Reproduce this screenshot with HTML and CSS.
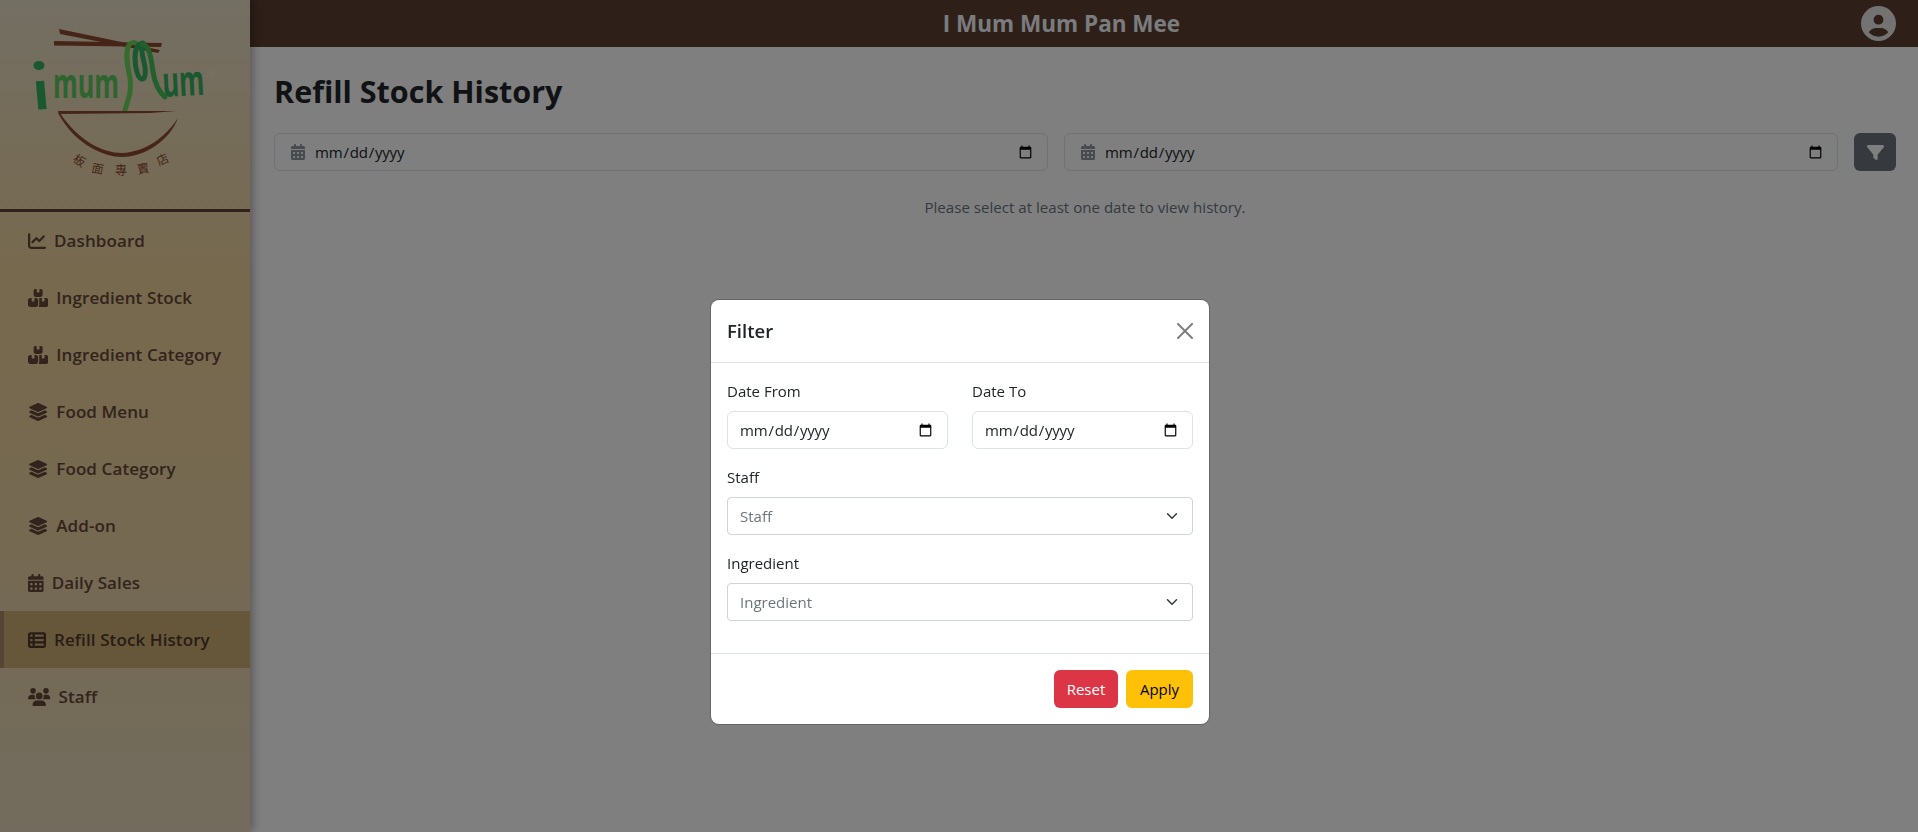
FILE: index.html
```html
<!DOCTYPE html>
<html lang="en">
<head>
<meta charset="utf-8">
<title>Refill Stock History</title>
<link rel="stylesheet" href="styles.css">
</head>
<body>
<svg class="defs" width="0" height="0" aria-hidden="true">
  <symbol id="i-chart" viewBox="0 0 512 512"><path d="M64 64c0-17.7-14.3-32-32-32S0 46.3 0 64V400c0 44.2 35.8 80 80 80H480c17.7 0 32-14.3 32-32s-14.3-32-32-32H80c-8.8 0-16-7.2-16-16V64zm406.6 86.6c12.5-12.5 12.5-32.8 0-45.3s-32.8-12.5-45.3 0L320 210.7l-57.4-57.4c-12.5-12.5-32.8-12.5-45.3 0l-112 112c-12.5 12.5-12.5 32.8 0 45.3s32.8 12.5 45.3 0L240 221.3l57.4 57.4c12.5 12.5 32.8 12.5 45.3 0l128-128z"/></symbol>
  <symbol id="i-boxes" viewBox="0 0 576 512"><path d="M248 0H208c-26.5 0-48 21.5-48 48V160c0 35.3 28.7 64 64 64H352c35.3 0 64-28.7 64-64V48c0-26.5-21.5-48-48-48H328V80c0 8.8-7.2 16-16 16H264c-8.8 0-16-7.2-16-16V0zM64 256c-35.3 0-64 28.7-64 64V448c0 35.3 28.7 64 64 64H224c35.3 0 64-28.7 64-64V320c0-35.3-28.7-64-64-64H184v80c0 8.8-7.2 16-16 16H120c-8.8 0-16-7.2-16-16V256H64zM352 512H512c35.3 0 64-28.7 64-64V320c0-35.3-28.7-64-64-64H472v80c0 8.8-7.2 16-16 16H408c-8.8 0-16-7.2-16-16V256H352c-15 0-28.8 5.1-39.7 13.8c4.9 15.4 7.7 31.8 7.7 48.2V448c0 23.3-7 44.8-18.9 62.8c5.1 .8 10.3 1.2 15.7 1.2z"/></symbol>
  <symbol id="i-layers" viewBox="0 0 576 512"><path d="M264.5 5.2c14.9-6.9 32.1-6.9 47 0l218.6 101c8.5 3.9 13.9 12.4 13.9 21.8s-5.4 17.9-13.9 21.8l-218.6 101c-14.9 6.9-32.1 6.9-47 0L45.9 149.8C37.4 145.8 32 137.3 32 128s5.4-17.9 13.9-21.8L264.5 5.2zM476.9 209.6l53.2 24.6c8.5 3.9 13.9 12.4 13.9 21.8s-5.4 17.9-13.9 21.8l-218.6 101c-14.9 6.9-32.1 6.9-47 0L45.9 277.8C37.4 273.8 32 265.3 32 256s5.4-17.9 13.9-21.8l53.2-24.6 152 70.2c23.4 10.8 50.4 10.8 73.8 0l152-70.2zm-152 198.2l152-70.2 53.2 24.6c8.5 3.9 13.9 12.4 13.9 21.8s-5.4 17.9-13.9 21.8l-218.6 101c-14.9 6.9-32.1 6.9-47 0L45.9 405.8C37.4 401.8 32 393.3 32 384s5.4-17.9 13.9-21.8l53.2-24.6 152 70.2c23.4 10.8 50.4 10.8 73.8 0z"/></symbol>
  <symbol id="i-calendar" viewBox="0 0 448 512"><path d="M128 0c17.7 0 32 14.3 32 32V64H288V32c0-17.7 14.3-32 32-32s32 14.3 32 32V64h48c26.5 0 48 21.5 48 48v48H0V112C0 85.5 21.5 64 48 64H96V32c0-17.7 14.3-32 32-32zM0 192H448V464c0 26.5-21.5 48-48 48H48c-26.5 0-48-21.5-48-48V192zm64 80v32c0 8.8 7.2 16 16 16h32c8.8 0 16-7.2 16-16V272c0-8.8-7.2-16-16-16H80c-8.8 0-16 7.2-16 16zm128 0v32c0 8.8 7.2 16 16 16h32c8.8 0 16-7.2 16-16V272c0-8.8-7.2-16-16-16H208c-8.8 0-16 7.2-16 16zm144-16c-8.8 0-16 7.2-16 16v32c0 8.8 7.2 16 16 16h32c8.8 0 16-7.2 16-16V272c0-8.8-7.2-16-16-16H336zM64 400v32c0 8.8 7.2 16 16 16h32c8.8 0 16-7.2 16-16V400c0-8.8-7.2-16-16-16H80c-8.8 0-16 7.2-16 16zm144-16c-8.8 0-16 7.2-16 16v32c0 8.8 7.2 16 16 16h32c8.8 0 16-7.2 16-16V400c0-8.8-7.2-16-16-16H208zm112 16v32c0 8.8 7.2 16 16 16h32c8.8 0 16-7.2 16-16V400c0-8.8-7.2-16-16-16H336c-8.8 0-16 7.2-16 16z"/></symbol>
  <symbol id="i-table" viewBox="0 0 512 512"><path d="M0 96C0 60.7 28.7 32 64 32H448c35.3 0 64 28.7 64 64V416c0 35.3-28.7 64-64 64H64c-35.3 0-64-28.7-64-64V96zm64 0v64h64V96H64zm384 0H192v64H448V96zM64 224v64h64V224H64zm384 0H192v64H448V224zM64 352v64h64V352H64zm384 0H192v64H448V352z"/></symbol>
  <symbol id="i-users" viewBox="0 0 640 512"><path d="M144 0a80 80 0 1 1 0 160A80 80 0 1 1 144 0zM512 0a80 80 0 1 1 0 160A80 80 0 1 1 512 0zM0 298.7C0 239.8 47.8 192 106.7 192h42.7c15.9 0 31 3.5 44.6 9.7c-1.3 7.2-1.9 14.7-1.9 22.3c0 38.2 16.8 72.5 43.3 96c-.2 0-.4 0-.7 0H21.3C9.6 320 0 310.4 0 298.7zM405.3 320c-.2 0-.4 0-.7 0c26.6-23.5 43.3-57.8 43.3-96c0-7.6-.7-15-1.9-22.3c13.6-6.3 28.7-9.7 44.6-9.7h42.7C592.2 192 640 239.8 640 298.7c0 11.8-9.6 21.3-21.3 21.3H405.3zM224 224a96 96 0 1 1 192 0 96 96 0 1 1 -192 0zM128 485.3C128 411.7 187.7 352 261.3 352H378.7C452.3 352 512 411.7 512 485.3c0 14.7-11.9 26.7-26.7 26.7H154.7c-14.7 0-26.7-11.9-26.7-26.7z"/></symbol>
</svg>

<div class="app">
  <aside class="sidebar">
    <div class="logo">
      <svg class="logo-art" width="250" height="209" viewBox="0 0 250 209" role="img" aria-label="I Mum Mum logo">
        <path class="lg-wood" d="M59 29 L160 50 L158 53 L60 34Z"/>
        <path class="lg-wood" d="M54 41 L162 43 L161 47 L54 45.5Z"/>
        <ellipse class="lg-dark" cx="39" cy="65.5" rx="5.5" ry="4.5"/>
        <text class="lg-word lg-dark" transform="translate(34 110) rotate(-5)" font-size="52" textLength="17" lengthAdjust="spacingAndGlyphs">ı</text>
        <text class="lg-word lg-light" x="53" y="98" font-size="42" textLength="66" lengthAdjust="spacingAndGlyphs">mum</text>
        <text class="lg-word lg-dark" transform="translate(163 97) rotate(-3)" font-size="42" textLength="42" lengthAdjust="spacingAndGlyphs">um</text>
        <path class="lg-noodle-l" d="M125 110 C129 97 132 90 130 78 C127 64 125 52 129 45 C131 42 135 42 137 44"/>
        <path class="lg-noodle-d" d="M143 43 C137 44 135 50 135 58 C135 68 138 79 142 79 C146 79 146 70 144 62 C142 54 141 48 142 44"/>
        <path class="lg-noodle-m" d="M142 44 C150 46 151 58 153 72 C155 84 159 92 165 97"/>
        <path class="lg-wood" d="M58 111 L176 111 L150 113 L59 114Z"/>
        <path class="lg-wood" d="M58 113 C75 145 105 157 122 157 C145 157 170 140 178 118 C165 138 145 152 122 153 C102 153 78 140 60 113Z"/>
        <text class="lg-mark" x="207" y="79" font-size="10">®</text>
        <g class="lg-cjk" font-size="12">
          <text transform="translate(72 161) rotate(32)">板</text>
          <text transform="translate(91 172) rotate(10)">面</text>
          <text transform="translate(115 175)">專</text>
          <text transform="translate(138 174) rotate(-10)">賣</text>
          <text transform="translate(159 166) rotate(-25)">店</text>
        </g>
      </svg>
    </div>
    <nav class="nav">
      <a class="nav-item"><svg class="ico w18"><use href="#i-chart"/></svg>Dashboard</a>
      <a class="nav-item"><svg class="ico w20"><use href="#i-boxes"/></svg>Ingredient Stock</a>
      <a class="nav-item"><svg class="ico w20"><use href="#i-boxes"/></svg>Ingredient Category</a>
      <a class="nav-item"><svg class="ico w20"><use href="#i-layers"/></svg>Food Menu</a>
      <a class="nav-item"><svg class="ico w20"><use href="#i-layers"/></svg>Food Category</a>
      <a class="nav-item"><svg class="ico w20"><use href="#i-layers"/></svg>Add-on</a>
      <a class="nav-item"><svg class="ico w16"><use href="#i-calendar"/></svg>Daily Sales</a>
      <a class="nav-item active"><svg class="ico w18"><use href="#i-table"/></svg>Refill Stock History</a>
      <a class="nav-item"><svg class="ico w22"><use href="#i-users"/></svg>Staff</a>
    </nav>
  </aside>

  <div class="main">
    <header class="topbar">
      <div class="brand">I Mum Mum Pan Mee</div>
      <svg class="avatar" viewBox="0 0 512 512"><path d="M399 384.2C376.9 345.8 335.4 320 288 320H224c-47.4 0-88.9 25.8-111 64.2c35.2 39.2 86.2 63.8 143 63.8s107.8-24.7 143-63.8zM0 256a256 256 0 1 1 512 0A256 256 0 1 1 0 256zm256 16a72 72 0 1 0 0-144 72 72 0 1 0 0 144z"/></svg>
    </header>
    <section class="content">
      <h1 class="title">Refill Stock History</h1>
      <div class="filters">
        <label class="date-field"><svg class="date-ico"><use href="#i-calendar"/></svg><input class="date-input" type="date"></label>
        <label class="date-field"><svg class="date-ico"><use href="#i-calendar"/></svg><input class="date-input" type="date"></label>
        <button class="filter-btn" type="button"><svg class="filter-ico" viewBox="0 0 512 512"><path d="M3.9 54.9C10.5 40.9 24.5 32 40 32H472c15.5 0 29.5 8.9 36.1 22.9s4.6 30.5-5.2 42.5L320 320.9V448c0 12.1-6.8 23.2-17.7 28.6s-23.8 4.3-33.5-3l-64-48c-8.1-6-12.8-15.5-12.8-25.6V320.9L9 97.3C-.7 85.4-2.8 68.8 3.9 54.9z"/></svg></button>
      </div>
      <p class="note">Please select at least one date to view history.</p>
    </section>
  </div>
</div>

<div class="overlay">
  <div class="modal">
    <div class="modal-head">
      <h2 class="modal-title">Filter</h2>
      <svg class="close" viewBox="0 0 16 16"><path d="M.293.293a1 1 0 0 1 1.414 0L8 6.586 14.293.293a1 1 0 1 1 1.414 1.414L9.414 8l6.293 6.293a1 1 0 0 1-1.414 1.414L8 9.414l-6.293 6.293a1 1 0 0 1-1.414-1.414L6.586 8 .293 1.707a1 1 0 0 1 0-1.414z"/></svg>
    </div>
    <div class="modal-body">
      <div class="two-col">
        <div class="group"><label class="lbl">Date From</label><input class="ctl" type="date"></div>
        <div class="group"><label class="lbl">Date To</label><input class="ctl" type="date"></div>
      </div>
      <div class="group"><label class="lbl">Staff</label>
        <select class="ctl sel"><option>Staff</option></select></div>
      <div class="group"><label class="lbl">Ingredient</label>
        <select class="ctl sel"><option>Ingredient</option></select></div>
    </div>
    <div class="modal-foot">
      <button class="btn btn-reset" type="button">Reset</button>
      <button class="btn btn-apply" type="button">Apply</button>
    </div>
  </div>
</div>
</body>
</html>
```
FILE: styles.css
```css
* { box-sizing: border-box; }
html, body { height: 100%; }
body {
  margin: 0;
  font-family: "Open Sans", "Noto Sans", sans-serif;
  font-size: 15.1px;
  line-height: 1.6;
  color: #212529;
  background: #fff;
  overflow: hidden;
}
.defs { position: absolute; }
.app { display: flex; height: 100vh; }

/* Sidebar */
.sidebar {
  flex: 0 0 250px;
  width: 250px;
  background: linear-gradient(180deg, #e8dec8 0%, #eed29a 35%, #ead2a4 65%, #e6d8bc 100%);
  box-shadow: 2px 0 10px rgba(0,0,0,.35);
  z-index: 2;
}
.logo { height: 212px; border-bottom: 3px solid #604434; }
.logo-art { display: block; }
.lg-wood { fill: #8c4a30; }
.lg-dark { fill: #34b060; }
.lg-light { fill: #5cc85c; }
.lg-word { font-family: "Open Sans", sans-serif; font-weight: 700; }
.lg-noodle-l, .lg-noodle-d, .lg-noodle-m { fill: none; stroke-width: 5; stroke-linecap: round; }
.lg-noodle-l { stroke: #6ad85a; }
.lg-noodle-d { stroke: #34b060; }
.lg-noodle-m { stroke: #44c05c; }
.lg-mark { fill: #f0e8d8; font-family: "Open Sans", sans-serif; }
.lg-cjk { fill: #8c4a30; font-family: "Noto Sans CJK TC", sans-serif; }

.nav { display: flex; flex-direction: column; }
.nav-item {
  display: flex;
  align-items: center;
  height: 57px;
  padding-left: 28px;
  font-size: 17px;
  font-weight: 600;
  letter-spacing: .1px;
  color: #644838;
}
.nav-item.active {
  background: #cfae74;
  box-shadow: inset 4px 0 0 #ac8a6c;
  color: #4e3a2c;
}
.ico { height: 18px; margin-right: 8px; fill: currentColor; flex: none; }
.w16 { width: 15.75px; }
.w18 { width: 18px; }
.w20 { width: 20.25px; }
.w22 { width: 22.5px; }

/* Main */
.main { flex: 1; min-width: 0; display: flex; flex-direction: column; }
.topbar {
  height: 47px;
  background: #5c3e30;
  display: flex;
  align-items: center;
  padding: 0 22px 0 12px;
}
.brand {
  flex: 1;
  text-align: center;
  color: #f5f8fc;
  font-size: 22.5px;
  font-weight: 700;
}
.avatar { width: 35px; height: 35px; fill: #e6e6e6; flex: none; }
.content { padding: 24px 22px 0 24px; }
.title { margin: 0 0 22px; font-size: 30.5px; line-height: 40px; font-weight: 700; color: #212529; }
.filters { display: flex; gap: 16px; align-items: stretch; height: 38px; }
.date-field {
  flex: 1;
  display: flex;
  align-items: center;
  gap: 9px;
  padding: 0 12px 0 16px;
  background: #fff;
  border: 1px solid #dee2e6;
  border-radius: 6px;
}
.date-ico { width: 14px; height: 16px; fill: #8e949f; flex: none; }
.date-input {
  flex: 1;
  min-width: 0;
  border: 0;
  padding: 0;
  background: transparent;
  font: inherit;
  font-size: 15px;
  letter-spacing: -.2px;
  color: #212529;
  outline: none;
}
.filter-btn {
  width: 42px;
  flex: none;
  background: #6c757d;
  border: 0;
  border-radius: 6px;
  display: flex;
  align-items: center;
  justify-content: center;
  padding: 0;
}
.filter-ico { width: 17px; height: 17px; fill: #fff; }
.note { margin: 24px 0 0; text-align: center; color: #6c757d; line-height: 24px; }

/* Modal */
.overlay {
  position: fixed;
  inset: 0;
  z-index: 10;
  background: rgba(0,0,0,.5);
  display: flex;
  justify-content: center;
  align-items: flex-start;
  padding: 300px 0 0 2px;
}
.modal {
  width: 498px;
  background: #fff;
  border-radius: 8px;
  box-shadow: 0 0 0 1px rgba(0,0,0,.2);
}
.modal-head {
  height: 63px;
  padding: 0 16px;
  display: flex;
  align-items: center;
  justify-content: space-between;
  border-bottom: 1px solid #dee2e6;
}
.modal-title { margin: 0; font-size: 18.5px; font-weight: 600; line-height: 30px; }
.close { width: 16px; height: 16px; fill: #000; opacity: .5; }
.modal-body { padding: 16px 16px 0; height: 290px; }
.two-col { display: grid; grid-template-columns: 1fr 1fr; gap: 24px; }
.group { margin-bottom: 16px; }
.lbl { display: block; height: 24px; line-height: 24px; margin-bottom: 8px; font-size: 15px; }
.ctl {
  display: block;
  width: 100%;
  height: 38px;
  padding: 0 12px 0 11px;
  background-color: #fff;
  border: 1px solid #dee2e6;
  border-radius: 6px;
  font: inherit;
  font-size: 15px;
  letter-spacing: -.2px;
  color: #212529;
  outline: none;
}
.sel {
  appearance: none;
  letter-spacing: 0;
  padding-left: 12px;
  color: #6c757d;
  border-color: #ced4da;
  border-radius: 4px;
  background-image: url("data:image/svg+xml,%3csvg xmlns='http://www.w3.org/2000/svg' viewBox='0 0 16 16'%3e%3cpath fill='none' stroke='%23343a40' stroke-linecap='round' stroke-linejoin='round' stroke-width='2' d='m2 5 6 6 6-6'/%3e%3c/svg%3e");
  background-repeat: no-repeat;
  background-position: right 12px center;
  background-size: 16px 12px;
}
.modal-foot {
  height: 71px;
  padding: 0 16px;
  display: flex;
  align-items: center;
  justify-content: flex-end;
  gap: 8px;
  border-top: 1px solid #dee2e6;
}
.btn {
  height: 38px;
  padding: 0 12px;
  border: 0;
  border-radius: 6px;
  font: inherit;
  font-size: 15px;
}
.btn-reset { background: #dc3545; color: #fff; width: 64px; }
.btn-apply { background: #ffc107; color: #000; width: 67px; }
```
